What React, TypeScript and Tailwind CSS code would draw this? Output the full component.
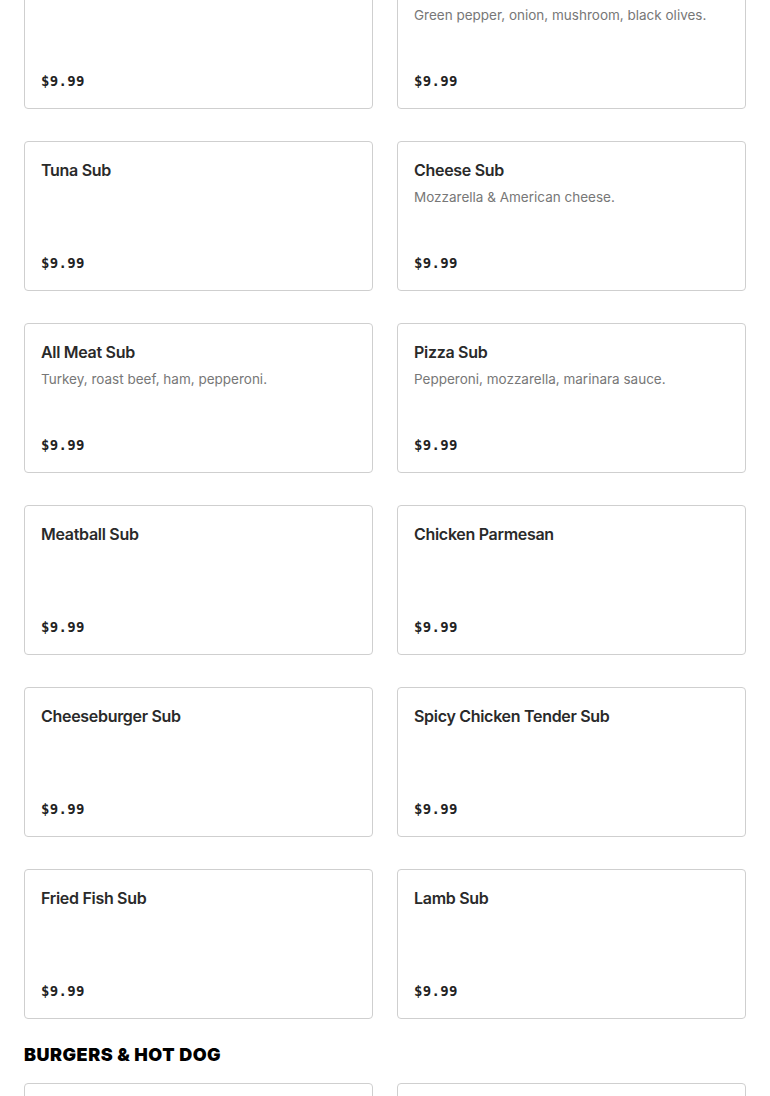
type Item = { name: string; desc?: string; price: string };

const subs: Item[] = [
  { name: "Ham Sub", price: "$9.99" },
  { name: "Veggie Sub", desc: "Green pepper, onion, mushroom, black olives.", price: "$9.99" },
  { name: "Tuna Sub", price: "$9.99" },
  { name: "Cheese Sub", desc: "Mozzarella & American cheese.", price: "$9.99" },
  { name: "All Meat Sub", desc: "Turkey, roast beef, ham, pepperoni.", price: "$9.99" },
  { name: "Pizza Sub", desc: "Pepperoni, mozzarella, marinara sauce.", price: "$9.99" },
  { name: "Meatball Sub", price: "$9.99" },
  { name: "Chicken Parmesan", price: "$9.99" },
  { name: "Cheeseburger Sub", price: "$9.99" },
  { name: "Spicy Chicken Tender Sub", price: "$9.99" },
  { name: "Fried Fish Sub", price: "$9.99" },
  { name: "Lamb Sub", price: "$9.99" },
];

const burgers: Item[] = [
  { name: "Hamburger", price: "$8.99" },
  { name: "Hot Dog", price: "$5.99" },
];

function MenuCard({ item }: { item: Item }) {
  return (
    <div className="flex h-[150px] flex-col justify-between rounded-[4px] border border-[#cfcfcf] bg-white px-4 pt-4 pb-[17px]">
      <div>
        <div className="text-[16px] leading-6 font-semibold tracking-[-0.3px] text-[#2a2a2a]">
          {item.name}
        </div>
        {item.desc && (
          <div className="mt-[5px] text-[13.5px] leading-5 text-[#777777]">{item.desc}</div>
        )}
      </div>
      <div className="font-['DejaVu_Sans_Mono',monospace] text-[14px] leading-5 font-bold tracking-[0.3px] text-[#222]">
        {item.price}
      </div>
    </div>
  );
}

export default function App() {
  return (
    <div className="min-h-screen bg-white font-['Inter',sans-serif]">
      <div className="-mt-[41px] px-6">
        <div className="grid grid-cols-2 gap-x-6 gap-y-8">
          {subs.map((s) => (
            <MenuCard key={s.name} item={s} />
          ))}
        </div>
        <h2 className="mt-6 mb-4 text-[18px] leading-6 font-black tracking-[0.5px] text-black uppercase">
          Burgers &amp; Hot Dog
        </h2>
        <div className="grid grid-cols-2 gap-x-6 gap-y-8">
          {burgers.map((s) => (
            <MenuCard key={s.name} item={s} />
          ))}
        </div>
      </div>
    </div>
  );
}
